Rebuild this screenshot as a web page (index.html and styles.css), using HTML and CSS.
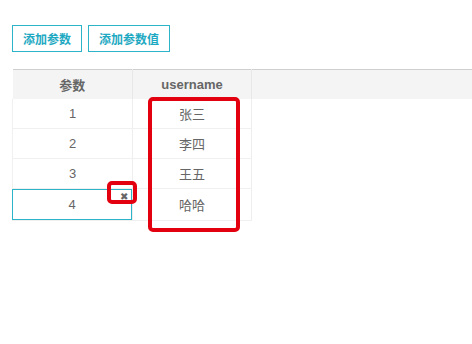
FILE: index.html
```html
<!DOCTYPE html>
<html lang="zh-CN">
<head>
<meta charset="utf-8">
<link rel="stylesheet" href="styles.css">
</head>
<body>
<div class="page">
  <div class="toolbar">
    <button class="btn">添加参数</button>
    <button class="btn">添加参数值</button>
  </div>
  <table class="grid">
    <colgroup>
      <col class="c1"><col class="c2"><col>
    </colgroup>
    <thead>
      <tr><th>参数</th><th>username</th><th class="rest"></th></tr>
    </thead>
    <tbody>
      <tr><td>1</td><td>张三</td><td class="rest"></td></tr>
      <tr><td>2</td><td>李四</td><td class="rest"></td></tr>
      <tr><td>3</td><td>王五</td><td class="rest"></td></tr>
      <tr><td class="editing"><div class="edit-box">4<span class="del">✖</span></div></td><td>哈哈</td><td class="rest"></td></tr>
    </tbody>
  </table>
  <div class="mark mark-col"></div>
  <div class="mark mark-del"></div>
</div>
</body>
</html>
```

FILE: styles.css
```css
html, body {
  margin: 0;
  padding: 0;
  background: #fff;
}
.page {
  position: relative;
  min-height: 300px;
  padding: 25px 0 0 12px;
  font-family: "Liberation Sans", "Noto Sans CJK SC", sans-serif;
  color: #666;
}
.toolbar {
  display: flex;
  gap: 6px;
}
.btn {
  height: 27px;
  padding: 0 10px;
  border: 1px solid #2eb4c9;
  background: #fff;
  color: #1ea9c2;
  font-family: "Noto Sans CJK SC", sans-serif;
  font-size: 12px;
  font-weight: 600;
  line-height: 25px;
}
.grid {
  margin-top: 17px;
  width: 100%;
  border-collapse: collapse;
  table-layout: fixed;
  font-size: 13px;
}
.c1 { width: 120px; }
.c2 { width: 119px; }
.grid th {
  height: 29px;
  padding: 0;
  background: #f4f4f4;
  border-top: 1px solid #cfcfcf;
  border-right: 1px solid #e8e8e8;
  font-weight: 600;
  color: #666;
}
.grid th.rest { border-right: none; }
.grid td {
  height: 29px;
  padding: 0;
  text-align: center;
  border-bottom: 1px solid #f0f0f0;
  border-right: 1px solid #eeeeee;
  color: #666;
}
.grid td:first-child { border-left: 1px solid #f0f0f0; }
.grid td.rest { border: none; }
.edit-box {
  position: relative;
  margin-left: -1px;
  box-sizing: border-box;
  height: 31px;
  line-height: 29px;
  border: 1px solid #2eb4c9;
}
.del {
  position: absolute;
  right: 3px;
  top: 0;
  line-height: 14px;
  font-size: 10px;
  color: #666;
}
.mark {
  position: absolute;
  z-index: 5;
  border: 4px solid #e3000f;
  border-radius: 5px;
  box-sizing: border-box;
}
.mark-col {
  left: 148px;
  top: 97px;
  width: 92px;
  height: 135px;
}
.mark-del {
  left: 107px;
  top: 181px;
  width: 30px;
  height: 23px;
}
```
